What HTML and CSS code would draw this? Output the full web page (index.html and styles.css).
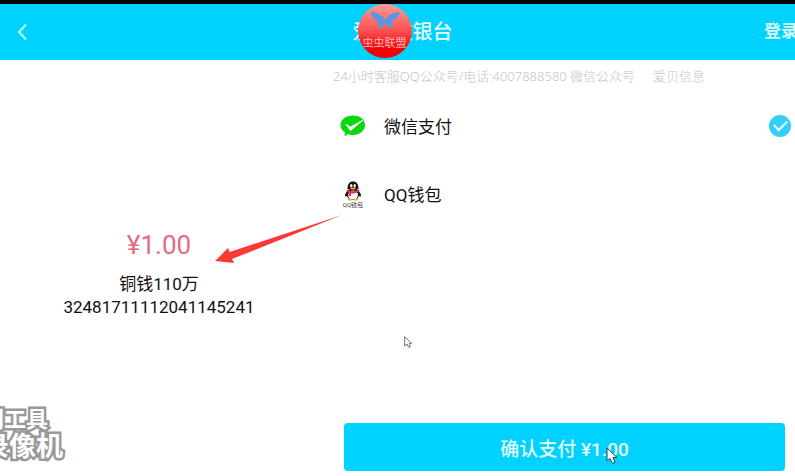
FILE: index.html
```html
<!DOCTYPE html>
<html lang="zh-CN">
<head>
    <meta charset="UTF-8">
    <meta name="viewport" content="width=device-width, initial-scale=1.0">
    <title>爱贝收银台</title>
    <link rel="stylesheet" href="styles.css">
</head>
<body>
    <!-- Header -->
    <header class="header">
        <a class="back" href="#" aria-label="返回">
            <svg width="12" height="18" viewBox="0 0 12 18"><path d="M10 1.500L3 9l7 7.500" fill="none" stroke="#c4f8ff" stroke-width="2"/></svg>
        </a>
        <div class="title-wrap">
            <h1 class="title">爱贝收银台</h1>
            <div class="logo">
                <svg class="wings" width="30" height="18" viewBox="0 0 30 18">
                    <path d="M0 0C7 0 12 3 15 8C18 3 23 0 30 0C28 5 26 8 22 9C23 12 22 15 20 17C18 15 16 13 15 11C14 13 12 15 10 17C8 15 7 12 8 9C4 8 2 5 0 0Z" fill="#5b96e0"/>
                </svg>
                <span class="logo-text">虫虫联盟</span>
            </div>
        </div>
        <a class="login" href="#">登录</a>
    </header>

    <main class="main">
        <!-- Order info -->
        <section class="order">
            <p class="price">¥1.00</p>
            <p class="item">铜钱110万</p>
            <p class="item">32481711112041145241</p>
        </section>

        <!-- Payment methods -->
        <form class="pay">
            <p class="notice">24小时客服QQ公众号/电话:4007888580 微信公众号<span class="company">爱贝信息</span></p>

            <label class="method" for="wechat">
                <svg class="method-icon" width="26" height="34" viewBox="0 0 26 34">
                    <path d="M13 6.500C20 6.500 25 10.500 25 16C25 21.500 20 26 13 26C11 26 9.500 25.700 8 25L4.500 27.500L5 23.500C2 21.500 0.500 19 0.500 16C0.500 10.500 6 6.500 13 6.500Z" fill="#08d80c"/>
                    <path d="M6 15.500L10.500 18L22.500 11.500L10.500 21.500Z" fill="#fff" stroke="#fff" stroke-linejoin="round"/>
                </svg>
                <span class="method-name">微信支付</span>
                <input class="radio" type="radio" id="wechat" name="method" checked>
            </label>

            <label class="method" for="qq">
                <span class="method-icon qq-icon">
                    <svg width="18" height="20" viewBox="0 0 18 20">
                        <path d="M4 9L1 13.500L1.500 16L4 14M14 9L17 13.500L16.500 16L14 14" fill="#111"/>
                        <ellipse cx="9" cy="13" rx="6.500" ry="6" fill="#111"/>
                        <ellipse cx="9" cy="14" rx="5" ry="4.500" fill="#fff"/>
                        <path d="M3.500 8C3.500 3 5.500 0.500 9 0.500S14.500 3 14.500 8Z" fill="#111"/>
                        <ellipse cx="7.300" cy="4.800" rx="1.200" ry="1.700" fill="#fff"/>
                        <ellipse cx="10.700" cy="4.800" rx="1.200" ry="1.700" fill="#fff"/>
                        <ellipse cx="9" cy="7.500" rx="3" ry="1" fill="#f5b021"/>
                        <path d="M3 8.500Q9 12 15 8.500L15.500 10.500Q10 13 7 12.300V15H4.500V11.500L2.500 10.500Z" fill="#f0284a"/>
                        <path d="M3 18.500Q5.500 17 8.500 19Q6 20.500 3 18.500M15 18.500Q12.500 17 9.500 19Q12 20.500 15 18.500" fill="#f5b021"/>
                    </svg>
                    <span class="qq-caption">QQ钱包</span>
                </span>
                <span class="method-name">QQ钱包</span>
                <input class="radio" type="radio" id="qq" name="method">
            </label>

            <button class="confirm" type="button">确认支付 ¥1.00</button>
        </form>
    </main>

    <!-- Things lying over the page -->
    <svg class="arrow" width="128" height="50" viewBox="0 0 128 50">
        <path d="M0 47L13 34L14.500 38L127 1L17 45L19 49Z" fill="#fb3a38"/>
    </svg>

    <svg class="cursor cursor-small" width="8" height="12" viewBox="0 0 12 18">
        <path d="M1 1V15L4.500 12L7 17L9.500 16L7.500 11H11.500Z" fill="#fff" stroke="#666" stroke-width="1.400"/>
    </svg>
    <svg class="cursor cursor-big" width="12" height="18" viewBox="0 0 12 18">
        <path d="M1 1V14L4 11.500L6.500 16.500L9 15.500L7 10.500H11Z" fill="#fff" stroke="#25425c"/>
    </svg>

    <div class="watermark">
        <div class="mark-top">利工具</div>
        <div class="mark-bottom">录像机</div>
    </div>
</body>
</html>
```
FILE: styles.css
```css
* {
    box-sizing: border-box;
}

body {
    margin: 0;
    min-height: 100vh;
    display: flex;
    flex-direction: column;
    position: relative;
    overflow: hidden;
    background-color: #fff;
    color: #111;
    font-family: Roboto, "Noto Sans CJK SC", sans-serif;
    font-size: 17px;
}

p, h1 {
    margin: 0;
}

a {
    text-decoration: none;
}

/* Header */
.header {
    display: grid;
    grid-template-columns: 1fr auto 1fr;
    align-items: center;
    height: 60px;
    border-top: 4px solid #000;
    background-color: #00d2ff;
}

.back {
    display: flex;
    padding-left: 16px;
}

.title-wrap {
    position: relative;
    padding-left: 10px;
}

.title {
    color: #e4fcff;
    font-size: 20px;
    font-weight: 500;
    line-height: 28px;
}

.logo {
    position: absolute;
    top: -14px;
    left: 15px;
    width: 54px;
    height: 54px;
    border-radius: 50%;
    background: linear-gradient(#ff9c98, #fa5050 50%, #f40000 85%);
}

.wings {
    display: block;
    margin: 8px auto 0;
}

.logo-text {
    display: block;
    color: #ffe4e0;
    font-family: "Noto Sans CJK SC", sans-serif;
    font-size: 11px;
    font-weight: 300;
    line-height: 24px;
    text-align: center;
    white-space: nowrap;
}

.login {
    justify-self: end;
    margin-right: -3px;
    color: #d4faff;
    font-weight: 700;
    line-height: 28px;
    padding-bottom: 2px;
    white-space: nowrap;
}

/* Two columns */
.main {
    flex: 1;
    display: grid;
    grid-template-columns: 2fr 3fr;
}

.order {
    align-self: center;
    padding-top: 8px;
    text-align: center;
}

.price {
    margin-bottom: 8px;
    color: #e46a84;
    font-size: 26px;
    line-height: 40px;
}

.item {
    line-height: 23px;
}

.pay {
    display: flex;
    flex-direction: column;
    padding: 0 4px 5px 22px;
}

.notice {
    margin-left: -7px;
    color: #c4c4c4;
    font-family: "Noto Sans", "Noto Sans CJK SC", sans-serif;
    font-size: 13px;
    font-weight: 300;
    line-height: 32px;
}

.company {
    margin-left: 18px;
}

.method {
    display: flex;
    align-items: center;
    height: 68px;
}

.method-icon {
    width: 26px;
    margin-right: 18px;
}

.qq-icon {
    display: flex;
    flex-direction: column;
    align-items: center;
}

.qq-caption {
    color: #333;
    font-size: 6px;
    line-height: 7px;
    white-space: nowrap;
}

.method-name {
    flex: 1;
    padding-bottom: 2px;
}

.radio {
    appearance: none;
    width: 22px;
    height: 22px;
    margin: 0;
    border-radius: 50%;
}

.radio:checked {
    display: grid;
    place-items: center;
    background-color: #35cdfa;
}

.radio:checked::before {
    content: "";
    width: 11px;
    height: 6px;
    margin-bottom: 4px;
    border: solid #e8fbff;
    border-width: 0 0 2px 2px;
    transform: rotate(-45deg);
}

.confirm {
    height: 48px;
    margin: auto 6px 0 4px;
    border: 0;
    border-radius: 4px;
    background-color: #00d2ff;
    color: #e4fcff;
    font-family: inherit;
    font-size: 19px;
    font-weight: 500;
}

/* Overlays */
.arrow {
    position: absolute;
    top: 214px;
    left: 215px;
}

.cursor {
    position: absolute;
}

.cursor-small {
    top: 336px;
    left: 404px;
}

.cursor-big {
    top: 447px;
    left: 606px;
}

.watermark {
    position: absolute;
    top: 407px;
    left: -18px;
    color: #fff;
    font-weight: 700;
    white-space: nowrap;
    -webkit-text-stroke: 5px #999;
    paint-order: stroke fill;
}

.mark-top {
    font-size: 22px;
    line-height: 26px;
}

.mark-bottom {
    font-size: 27px;
    line-height: 28px;
}
```
